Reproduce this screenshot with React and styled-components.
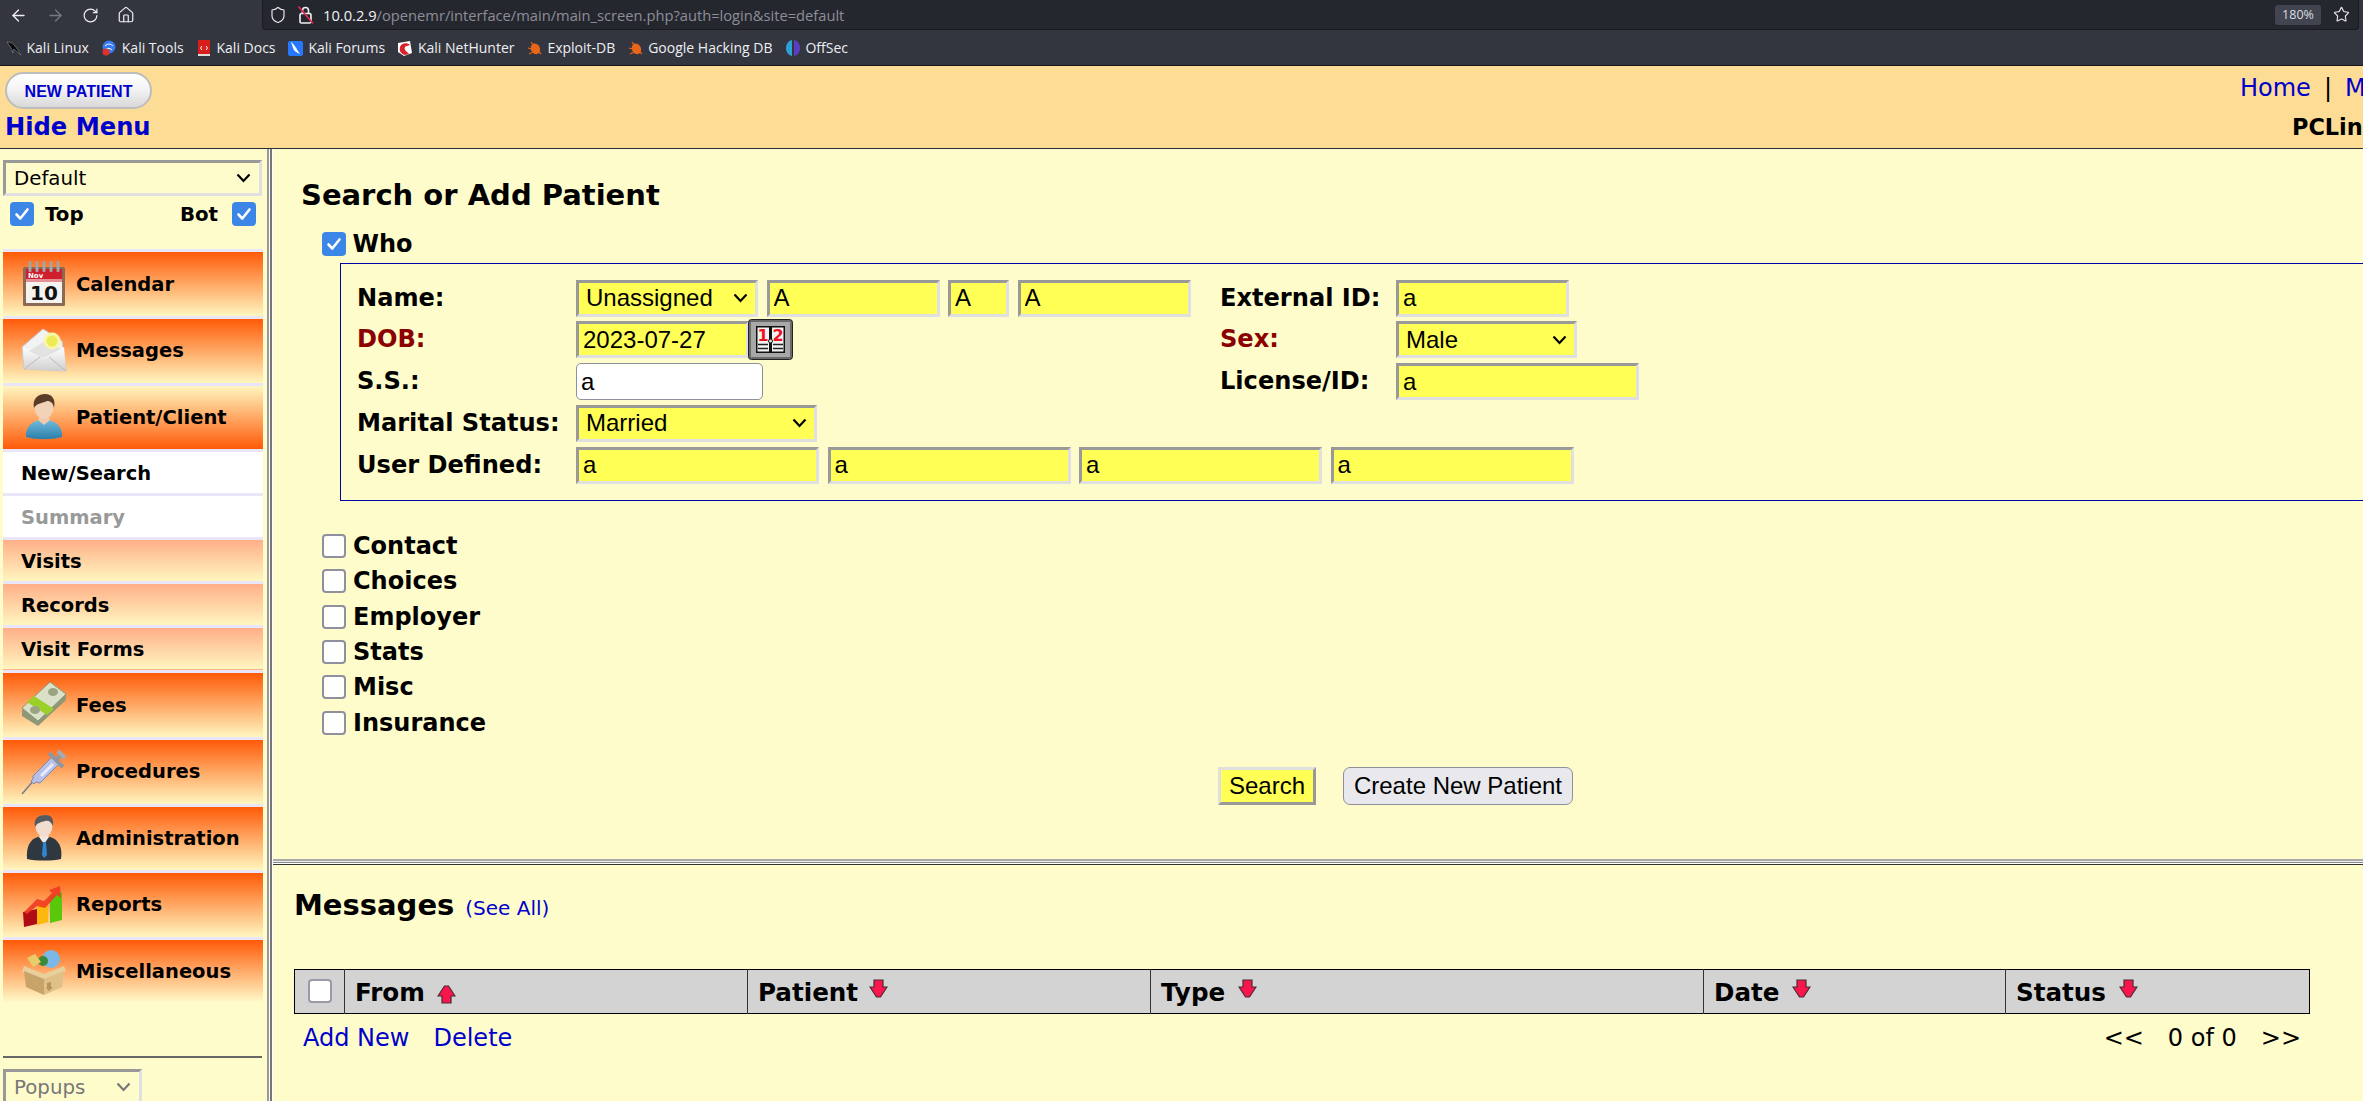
import React from "react";
import styled, { createGlobalStyle } from "styled-components";
import { ArrowLeft, ArrowRight, RotateCw, Home, Shield, Star } from "lucide-react";

const GlobalStyle = createGlobalStyle`
  html, body {
    margin: 0;
    padding: 0;
    height: 100%;
    overflow: hidden;
    background: #fffccc;
  }
  * { box-sizing: border-box; }
`;

const sans = `"DejaVu Sans", sans-serif`;
const arial = `"Liberation Sans", Arial, sans-serif`;
const ui = `"Open Sans", "Noto Sans", sans-serif`;

const Page = styled.div`
  width: 2363px;
  height: 1101px;
  overflow: hidden;
  display: flex;
  flex-direction: column;
  font-family: ${sans};
  color: #000;
  background: #fffccc;
`;

/* browser chrome */
const Chrome = styled.div`
  height: 66px;
  flex: none;
  background: #33363f;
  border-bottom: 1px solid #16171c;
`;

const NavRow = styled.div`
  height: 30px;
  display: flex;
  align-items: flex-start;
`;

const NavButtons = styled.div`
  width: 262px;
  height: 30px;
  padding-left: 9px;
  display: flex;
  align-items: center;
  gap: 17.5px;
  color: #f0f0f4;
`;

const UrlBar = styled.div`
  width: 2097px;
  height: 30px;
  background: #25272f;
  border: 1px solid #1a1b21;
  border-top: none;
  border-radius: 0 0 4px 4px;
  display: flex;
  align-items: center;
  padding-left: 6px;
  color: #e8e8ee;
`;

const UrlText = styled.span`
  font: 400 14.7px ${ui};
  margin-left: 8px;
  color: #8d8e98;
  white-space: nowrap;
  b {
    font-weight: 400;
    color: #f2f2f6;
  }
`;

const ZoomBadge = styled.span`
  margin-left: auto;
  width: 46px;
  height: 20px;
  background: #42444f;
  border-radius: 3px;
  color: #dcdde3;
  font: 400 12.5px/20px ${ui};
  text-align: center;
`;

const StarWrap = styled.span`
  margin: 0 8px 0 12px;
  display: flex;
  color: #e6e6ea;
`;

const BookmarkRow = styled.div`
  height: 35px;
  padding-left: 6px;
  display: flex;
  align-items: center;
  gap: 12.4px;
`;

const Bookmark = styled.span`
  display: flex;
  align-items: center;
  gap: 4.5px;
  font: 400 14px ${ui};
  color: #eeeef2;
  white-space: nowrap;
`;

/* orange header */
const Header = styled.header`
  height: 83px;
  flex: none;
  background: #fddc95;
  border-bottom: 1px solid #2b2f3c;
  display: flex;
  padding: 6px 0 0 5px;
`;

const HeaderLeft = styled.div`
  display: flex;
  flex-direction: column;
`;

const NewPatient = styled.button`
  width: 147px;
  height: 37px;
  border: 2px solid #bdbdbd;
  border-radius: 19px;
  background: linear-gradient(#fff 0%, #f4f4f4 45%, #d9d9d9 100%);
  color: #0000cc;
  font: 700 16px ${arial};
  padding: 2px 0 0;
`;

const HideMenu = styled.a`
  margin-top: 4px;
  color: #0000cc;
  font: 700 24.2px/28px ${sans};
`;

const HeaderRight = styled.div`
  margin-left: auto;
  width: 123px;
  white-space: nowrap;
  display: flex;
  flex-direction: column;
`;

const TopLinks = styled.div`
  font: 400 24px/32px ${sans};
  color: #0000cc;
  span {
    color: #000;
    margin: 0 13px;
  }
`;

const SiteName = styled.div`
  margin-top: 10px;
  padding-left: 52px;
  font: 700 22.4px/26px ${sans};
`;

/* body */
const Body = styled.div`
  flex: 1;
  display: flex;
  min-height: 0;
`;

const Sidebar = styled.aside`
  width: 267px;
  flex: none;
  display: flex;
  flex-direction: column;
  padding: 11px 0 0 3px;
  overflow: hidden;
`;

const SideSelect = styled.div`
  height: 36px;
  flex: none;
  border: 3px solid;
  border-color: #999 #e0e0e0 #e0e0e0 #999;
  display: flex;
  align-items: center;
  justify-content: space-between;
  padding: 0 8px 0 8px;
  font: 400 19.8px ${sans};
  color: ${(p) => (p.$muted ? "#777" : "#000")};
  width: ${(p) => p.$w || 259}px;
`;

const TopBot = styled.div`
  height: 24px;
  margin-top: 6px;
  width: 253px;
  padding-left: 7px;
  display: flex;
  align-items: center;
  font: 700 19.8px ${sans};
  flex: none;
`;

const Check = styled.span`
  width: 24px;
  height: 24px;
  flex: none;
  border-radius: 4px;
  display: flex;
  align-items: center;
  justify-content: center;
  background: ${(p) => (p.$on ? "#3b86e6" : "#fff")};
  border: ${(p) => (p.$on ? "none" : "2px solid #8f8f9d")};
`;

const TableCheck = styled(Check)`
  border: 2.5px solid #9a9aa8;
  margin-top: -3px;
`;

const TopBotLabel = styled.span`
  margin: ${(p) => (p.$right ? "0 14px 0 auto" : "0 0 0 11px")};
`;

const Menu = styled.nav`
  margin-top: 23.4px;
  width: 260px;
  flex: none;
`;

const MenuItem = styled.div`
  height: 66.6px;
  border-top: 3.6px solid #e9e6f9;
  display: flex;
  align-items: center;
  padding-left: 18px;
  font: 700 19.5px ${sans};
  background: ${(p) =>
    p.$open
      ? "linear-gradient(#fff6c0, #ff5a08)"
      : p.$last
      ? "linear-gradient(#ff5a08, #fffccc)"
      : "linear-gradient(#ff5a08, #fff6c0)"};
  background-clip: padding-box;
`;

const IconSlot = styled.span`
  width: 46px;
  height: 46px;
  margin-right: 9px;
  flex: none;
  display: flex;
`;

const SubItem = styled.div`
  height: 44px;
  border-top: 3.6px solid #e9e6f9;
  display: flex;
  align-items: center;
  padding: 2px 0 0 18px;
  font: 700 19.5px ${sans};
  color: ${(p) => (p.$muted ? "#999" : "#000")};
  background: ${(p) => (p.$plain ? "#fff" : "linear-gradient(#ffaf88, #fff6c0)")};
  background-clip: padding-box;
  ${(p) => (p.$edge ? "height: 45.2px; border-bottom: 1.2px solid #ffaf88;" : "")}
`;

const SideRule = styled.div`
  margin-top: 53px;
  width: 259px;
  height: 2px;
  flex: none;
  background: #666;
`;

const PopupWrap = styled.div`
  margin-top: 11px;
`;

const VSplit = styled.div`
  width: 6px;
  flex: none;
  background: linear-gradient(90deg, #999 0 2px, #fff 2px 3px, #777 3px 5px, #fff 5px);
`;

const HSplit = styled.div`
  height: 6px;
  flex: none;
  background: linear-gradient(#aaa 0 1.5px, #eee 1.5px 3px, #888 3px 4px, #fff 4px 5px, #333 5px);
`;

const Main = styled.main`
  flex: 1;
  min-width: 0;
  display: flex;
  flex-direction: column;
`;

const SearchPane = styled.section`
  height: 710px;
  flex: none;
  padding: 28.5px 0 0 28px;
`;

const Title = styled.h1`
  margin: 0;
  font: 700 29px/34px ${sans};
  white-space: nowrap;
`;

const GroupRow = styled.label`
  display: flex;
  align-items: center;
  gap: 7px;
  height: 35.3px;
  margin-left: 21px;
  font: 700 24px ${sans};
`;

const WhoRow = styled(GroupRow)`
  margin-top: 20px;
  height: 24px;
  gap: 6.5px;
`;

const WhoBox = styled.div`
  margin: 7px 0 0 39px;
  width: 2100px;
  height: 238px;
  border: 1px solid #0000aa;
  padding: 16px 0 0 16px;
  display: grid;
  grid-template-columns: 219px 644px 176px 1fr;
  grid-auto-rows: 41.8px;
  align-items: start;
`;

const Label = styled.div`
  font: 700 24.1px/37px ${sans};
  color: ${(p) => (p.$req ? "#8b0000" : "#000")};
  white-space: nowrap;
`;

const Fields = styled.div`
  display: flex;
  gap: 8.5px;
  align-items: flex-start;
`;

const WideFields = styled(Fields)`
  grid-column: 2 / -1;
`;

const Input = styled.input`
  width: ${(p) => p.$w}px;
  height: 37px;
  flex: none;
  padding: 0 0 0 4px;
  margin: 0;
  font: 400 24px ${arial};
  color: #000;
  outline: none;
  background: ${(p) => (p.$plain ? "#fff" : "#ffff55")};
  border: ${(p) => (p.$plain ? "1.5px solid #8f8f9d" : "3px solid")};
  border-color: ${(p) => (p.$plain ? "#8f8f9d" : "#999 #e0e0e0 #e0e0e0 #999")};
  border-radius: ${(p) => (p.$plain ? "5px" : "0")};
`;

const Select = styled.div`
  width: ${(p) => p.$w}px;
  height: 37px;
  flex: none;
  background: #ffff55;
  border: 3px solid;
  border-color: #999 #e0e0e0 #e0e0e0 #999;
  padding: 0 7px 0 7px;
  display: flex;
  align-items: center;
  justify-content: space-between;
  font: 400 24px ${arial};
`;

const DateWrap = styled.div`
  display: flex;
  align-items: flex-start;
`;

const CheckList = styled.div`
  margin-top: 28px;
`;

const Actions = styled.div`
  margin: 27px 0 0 917px;
  display: flex;
  gap: 27px;
`;

const SearchButton = styled.button`
  width: 98px;
  height: 38px;
  padding: 0;
  background: #ffff55;
  border: 3px solid;
  border-color: #e0e0e0 #999 #999 #e0e0e0;
  font: 400 24px ${arial};
`;

const CreateButton = styled.button`
  width: 230px;
  height: 38px;
  padding: 0;
  background: #e9e9ed;
  border: 1.5px solid #8f8f9d;
  border-radius: 7px;
  font: 400 24px ${arial};
`;

const MessagesPane = styled.section`
  flex: 1;
  padding: 23px 0 0 21px;
`;

const TitleRow = styled.div`
  display: flex;
  align-items: baseline;
  gap: 11px;
  white-space: nowrap;
`;

const SeeAll = styled.a`
  font: 400 20px ${sans};
  color: #0000cc;
`;

const Table = styled.table`
  margin-top: 46.5px;
  width: 2015px;
  height: 45px;
  table-layout: fixed;
  border-collapse: collapse;
  background: #d3d3d3;
  border: 1.5px solid #000;
`;

const Th = styled.th`
  width: ${(p) => p.$w}px;
  padding: 3px 0 0 10px;
  border-left: 1px solid #333;
  font: 700 24.6px ${sans};
  text-align: left;
  white-space: nowrap;
  &:first-child {
    padding-left: 13px;
    border-left: none;
  }
`;

const SortIcon = styled.svg`
  width: 19px;
  height: 19px;
  margin-left: ${(p) => p.$gap}px;
  vertical-align: ${(p) => (p.$up ? "-3px" : "3px")};
`;

const TableFooter = styled.div`
  margin-top: 9.5px;
  width: 2015px;
  display: flex;
  justify-content: space-between;
  padding: 0 8px 0 9px;
  font: 400 24px/30px ${sans};
`;

const FooterLinks = styled.div`
  display: flex;
  gap: 24px;
  color: #0000cc;
`;

const Pager = styled.div`
  display: flex;
  gap: 24px;
`;

function CheckMark() {
  return (
    <svg width="16" height="16" viewBox="0 0 16 16" fill="none">
      <path d="M2.5 8.5 6.3 12.5 13.5 3.5" stroke="#fff" strokeWidth="2.6" strokeLinecap="round" strokeLinejoin="round" />
    </svg>
  );
}

function Chevron({ color = "#000" }) {
  return (
    <svg width="15" height="10" viewBox="0 0 15 10" fill="none">
      <path d="M1.5 1.5 7.5 8 13.5 1.5" stroke={color} strokeWidth="2.2" />
    </svg>
  );
}

function LockSlash() {
  return (
    <svg width="18" height="20" viewBox="0 0 18 20" fill="none" style={{ marginLeft: 10 }}>
      <rect x="3" y="8.5" width="11" height="9.5" rx="1.5" stroke="#f0f0f4" strokeWidth="1.6" />
      <path d="M5.5 8.5V5.5a3 3 0 0 1 6 0v3" stroke="#f0f0f4" strokeWidth="1.6" />
      <path d="M1.5 1.5 16 18.5" stroke="#e22850" strokeWidth="1.7" />
    </svg>
  );
}

/* bookmark favicons */
const favicons = {
  kali: (
    <path d="M1 2c3 0 6 1 8 4 2 2 3 5 6 9-3-2-5-4-7-6-1 1-1 2-1 4-1-2-1-4-2-5-1-2-3-4-4-6z" fill="#0b0b0d" stroke="#9aa0a8" strokeWidth=".5" />
  ),
  tools: (
    <>
      <circle cx="8" cy="7" r="6.5" fill="#367bf0" />
      <path d="M4 6c3-3 6-2 8 0M5 9c2-1 4-1 6 1" stroke="#fff" fill="none" />
      <circle cx="5" cy="12" r="3.5" fill="#e0322d" />
    </>
  ),
  docs: (
    <>
      <rect x="2" y="0" width="12" height="16" fill="#d81d1d" />
      <rect x="2" y="14" width="12" height="2" fill="#ddd" />
      <path d="M6 6 4.5 8 6 10M10 6l1.5 2L10 10" stroke="#fff" fill="none" />
    </>
  ),
  forums: (
    <>
      <rect x="0" y="1" width="15" height="15" rx="2" fill="#2777ff" />
      <path d="M3 2c3 2 5 6 9 12-4-2-6-3-7-6z" fill="#fff" />
    </>
  ),
  hunter: (
    <>
      <path d="M1 3 13 1l2 12-8 3-6-4z" fill="#fff" />
      <path d="M3 7c1-4 7-5 10-2l-3 1C8 6 7 8 8 10l4 4-4 1C4 14 2 11 3 7z" fill="#d8222c" />
    </>
  ),
  bug: (
    <>
      <ellipse cx="8.5" cy="9" rx="4.5" ry="5.5" fill="#e8661a" transform="rotate(-25 8 9)" />
      <path d="M4 2l3 4M1 8l4 1M2 14l4-2M14 14l-3-3" stroke="#e8661a" strokeWidth="1.2" />
    </>
  ),
  offsec: (
    <>
      <path d="M7 0C3 1 1 4 1 8s2 7 6 8z" fill="#2f9fd8" />
      <path d="M9 0c4 1 6 4 6 8s-2 7-6 8z" fill="#5a3fc0" />
    </>
  ),
};

const bookmarks = [
  ["kali", "Kali Linux"],
  ["tools", "Kali Tools"],
  ["docs", "Kali Docs"],
  ["forums", "Kali Forums"],
  ["hunter", "Kali NetHunter"],
  ["bug", "Exploit-DB"],
  ["bug", "Google Hacking DB"],
  ["offsec", "OffSec"],
];

/* menu pictures */
function CalendarIcon() {
  return (
    <svg viewBox="0 0 46 46" width="46" height="46">
      <rect x="2" y="6" width="42" height="39" rx="1.5" fill="#8a6a52" />
      <rect x="5" y="8" width="36" height="34" fill="#f5f3f0" />
      <rect x="5" y="8" width="36" height="13" fill="#cf1f2c" />
      <rect x="5" y="18" width="36" height="3" fill="#fff" opacity=".5" />
      {[9, 16, 23, 30, 37].map((x) => (
        <rect key={x} x={x - 1.5} y="0" width="3" height="11" rx="1" fill="#a6a3a3" />
      ))}
      <text x="7" y="17" fontSize="7" fontWeight="700" fill="#fff" fontFamily={sans}>Nov</text>
      <text x="23" y="39" fontSize="20" fontWeight="700" fill="#111" textAnchor="middle" fontFamily={sans}>10</text>
    </svg>
  );
}

function MailIcon() {
  return (
    <svg viewBox="0 0 46 46" width="46" height="46">
      <defs>
        <linearGradient id="mailFace" x1="0" y1="0" x2="0" y2="1">
          <stop offset="0" stopColor="#fff" />
          <stop offset="1" stopColor="#cfcfcf" />
        </linearGradient>
      </defs>
      <path d="M1 19 22 1l19 12 4 30L3 41z" fill="#f3f3f3" stroke="#c9c9c9" />
      <path d="M3 19 23 31l20-12 2 24-42-2z" fill="url(#mailFace)" />
      <path d="M8 23 22 30 40 21 24 13z" fill="#e2e2e2" />
      <path d="M3 41 19 29M45 43 28 29" stroke="#bbb" fill="none" />
      <circle cx="31" cy="13" r="7" fill="#ecea55" stroke="#f8f6a8" strokeWidth="3" />
    </svg>
  );
}

function PatientIcon() {
  return (
    <svg viewBox="0 0 46 46" width="46" height="46">
      <defs>
        <linearGradient id="shirt" x1="0" y1="0" x2="0" y2="1">
          <stop offset="0" stopColor="#71bbe0" />
          <stop offset="1" stopColor="#2a7ea8" />
        </linearGradient>
      </defs>
      <path d="M5 43c-1-10 6-15 13-17h10c7 2 14 7 13 17-10 3-26 3-36 0z" fill="url(#shirt)" />
      <path d="M17 26l6 5 6-5-2-6h-8z" fill="#eec9aa" />
      <ellipse cx="23" cy="13" rx="9.5" ry="12" fill="#f2d3b8" />
      <path d="M13 14C11 4 18 0 24 0c7 0 11 5 9 14-1-5-3-7-7-7-4 2-10 2-13 7z" fill="#5a3c28" />
    </svg>
  );
}

function MoneyIcon() {
  return (
    <svg viewBox="0 0 46 46" width="46" height="46">
      <path d="M1 28 29 1l16 11v6L17 44 1 34z" fill="#8e9878" />
      <path d="M1 26 29 0l16 12-28 27z" fill="#dbe0c8" stroke="#8e9878" />
      <path d="M13 14 33 27 26 33 6 20z" fill="#9ad028" />
      <ellipse cx="32" cy="10" rx="5" ry="4" fill="#9aa483" />
      <ellipse cx="14" cy="28" rx="5" ry="4" fill="#9aa483" />
    </svg>
  );
}

function SyringeIcon() {
  return (
    <svg viewBox="0 0 46 46" width="46" height="46">
      <path d="M1 45 14 30" stroke="#777c8c" strokeWidth="1.5" />
      <path d="M12 27 31 8l7 7-19 19-4-1-2 2-3-3 2-2z" fill="#b8bfe8" stroke="#8088ac" />
      <path d="M20 27l12-12" stroke="#e8ebfa" strokeWidth="3" />
      <path d="M28 4l14 14M35 11l5-5" stroke="#8f969f" strokeWidth="4" />
      <path d="M37 2l7 7" stroke="#a4aab2" strokeWidth="4" />
    </svg>
  );
}

function AdminIcon() {
  return (
    <svg viewBox="0 0 46 46" width="46" height="46">
      <path d="M6 44c-1-12 3-20 11-22h12c8 2 13 10 11 22-9 2-25 2-34 0z" fill="#2f3740" />
      <path d="M18 22l5 7 5-7-3-4h-4z" fill="#f0e8e0" />
      <path d="M22 27h3l1 13-3 3-2-3z" fill="#2f86d0" />
      <ellipse cx="23" cy="11" rx="8.5" ry="11" fill="#f0ddcf" />
      <path d="M14 12C12 3 18 0 24 0c6 0 9 3 8 11-2-4-4-6-8-5-4 1-8 2-10 6z" fill="#555a60" />
    </svg>
  );
}

function ChartIcon() {
  return (
    <svg viewBox="0 0 46 46" width="46" height="46">
      <path d="M2 30l14-3v15L3 45z" fill="#b00c14" />
      <path d="M16 22l11-3v21l-11 3z" fill="#fdb80e" />
      <path d="M29 14l12-4v28l-12 3z" fill="#5ac80a" />
      <path d="M3 30 16 17l7 2 8-8-3-3 11-4 1 12-4-3-12 13-8-2-10 8z" fill="#ef3a22" opacity=".9" />
    </svg>
  );
}

function BoxIcon() {
  return (
    <svg viewBox="0 0 46 46" width="46" height="46">
      <circle cx="30" cy="10" r="9" fill="#7ab8e8" />
      <circle cx="22" cy="12" r="5" fill="#3a8a3a" />
      <path d="M6 9l8-4 6 8-8 5z" fill="#e8cc6a" />
      <path d="M3 17 23 25l20-8 2 5-22 8L1 23z" fill="#e8cf9c" />
      <path d="M3 22l20 8v16L5 38z" fill="#c9a46a" />
      <path d="M43 22 23 30v16l18-8z" fill="#dfc088" />
      <path d="M26 34l4-1v5l2 0-4 4-3-3 1 0z" fill="#b8935c" />
    </svg>
  );
}

function CalendarButton() {
  return (
    <svg width="45" height="41" viewBox="0 0 45 41" style={{ marginTop: -2, marginLeft: -1 }}>
      <rect x=".5" y=".5" width="44" height="40" rx="3" fill="#6a6a6a" stroke="#222" />
      <rect x="3" y="3" width="39" height="35" fill="#a8a8a8" />
      <rect x="8" y="7" width="29" height="27" fill="#111" />
      <rect x="9.5" y="8.5" width="11.5" height="24" fill="#f2f2f2" />
      <rect x="24" y="8.5" width="11.5" height="24" fill="#f2f2f2" />
      <text x="15" y="22" fontSize="16" fontWeight="700" fill="#f01020" textAnchor="middle" fontFamily={sans}>1</text>
      <text x="30" y="22" fontSize="16" fontWeight="700" fill="#f01020" textAnchor="middle" fontFamily={sans}>2</text>
      <path d="M10 25.5h10M10 29.5h10M25 25.5h10M25 29.5h10" stroke="#222" strokeWidth="1.5" />
      <circle cx="22.5" cy="22" r="2" fill="#ddd" stroke="#111" />
    </svg>
  );
}

function SortArrow({ up, gap = 13 }) {
  return (
    <SortIcon $up={up} $gap={gap} viewBox="0 0 19 19">
      <path
        d={up ? "M7.5 1H11.5L18 11H14V18H5V11H1Z" : "M5 1H14V8H18L11.5 18H7.5L1 8H5Z"}
        fill="#f8164c"
        stroke="#4a2a36"
        strokeWidth="1.2"
      />
    </SortIcon>
  );
}

const topMenu = [
  ["Calendar", CalendarIcon],
  ["Messages", MailIcon],
];

const lowerMenu = [
  ["Fees", MoneyIcon],
  ["Procedures", SyringeIcon],
  ["Administration", AdminIcon],
  ["Reports", ChartIcon],
  ["Miscellaneous", BoxIcon],
];

export default function App() {
  return (
    <Page>
      <GlobalStyle />
      <Chrome>
        <NavRow>
          <NavButtons>
            <ArrowLeft size={19} strokeWidth={1.6} />
            <ArrowRight size={19} strokeWidth={1.6} color="#777982" />
            <RotateCw size={17} strokeWidth={1.7} />
            <Home size={18} strokeWidth={1.6} />
          </NavButtons>
          <UrlBar>
            <Shield size={18} strokeWidth={1.6} />
            <LockSlash />
            <UrlText>
              <b>10.0.2.9</b>/openemr/interface/main/main_screen.php?auth=login&amp;site=default
            </UrlText>
            <ZoomBadge>180%</ZoomBadge>
            <StarWrap>
              <Star size={17} strokeWidth={1.6} />
            </StarWrap>
          </UrlBar>
        </NavRow>
        <BookmarkRow>
          {bookmarks.map(([icon, name]) => (
            <Bookmark key={name}>
              <svg width="16" height="16" viewBox="0 0 16 16">{favicons[icon]}</svg>
              {name}
            </Bookmark>
          ))}
        </BookmarkRow>
      </Chrome>

      <Header>
        <HeaderLeft>
          <NewPatient>NEW PATIENT</NewPatient>
          <HideMenu>Hide Menu</HideMenu>
        </HeaderLeft>
        <HeaderRight>
          <TopLinks>
            Home<span>|</span>Manual
          </TopLinks>
          <SiteName>PCLinuxOS</SiteName>
        </HeaderRight>
      </Header>

      <Body>
        <Sidebar>
          <SideSelect>
            Default
            <Chevron />
          </SideSelect>
          <TopBot>
            <Check $on>
              <CheckMark />
            </Check>
            <TopBotLabel>Top</TopBotLabel>
            <TopBotLabel $right>Bot</TopBotLabel>
            <Check $on>
              <CheckMark />
            </Check>
          </TopBot>
          <Menu>
            {topMenu.map(([name, Icon]) => (
              <MenuItem key={name}>
                <IconSlot>
                  <Icon />
                </IconSlot>
                {name}
              </MenuItem>
            ))}
            <MenuItem $open>
              <IconSlot>
                <PatientIcon />
              </IconSlot>
              Patient/Client
            </MenuItem>
            <SubItem $plain>New/Search</SubItem>
            <SubItem $plain $muted>Summary</SubItem>
            <SubItem>Visits</SubItem>
            <SubItem>Records</SubItem>
            <SubItem $edge>Visit Forms</SubItem>
            {lowerMenu.map(([name, Icon]) => (
              <MenuItem key={name} $last={name === "Miscellaneous"}>
                <IconSlot>
                  <Icon />
                </IconSlot>
                {name}
              </MenuItem>
            ))}
          </Menu>
          <SideRule />
          <PopupWrap>
            <SideSelect $muted $w={139}>
              Popups
              <Chevron color="#777" />
            </SideSelect>
          </PopupWrap>
        </Sidebar>
        <VSplit />
        <Main>
          <SearchPane>
            <Title>Search or Add Patient</Title>
            <WhoRow>
              <Check $on>
                <CheckMark />
              </Check>
              Who
            </WhoRow>
            <WhoBox>
              <Label>Name:</Label>
              <Fields>
                <Select $w={182}>
                  Unassigned
                  <Chevron />
                </Select>
                <Input $w={173} defaultValue="A" />
                <Input $w={61} defaultValue="A" />
                <Input $w={173} defaultValue="A" />
              </Fields>
              <Label>External ID:</Label>
              <Fields>
                <Input $w={173} defaultValue="a" />
              </Fields>

              <Label $req>DOB:</Label>
              <Fields>
                <DateWrap>
                  <Input $w={173} defaultValue="2023-07-27" />
                  <CalendarButton />
                </DateWrap>
              </Fields>
              <Label $req>Sex:</Label>
              <Fields>
                <Select $w={181}>
                  Male
                  <Chevron />
                </Select>
              </Fields>

              <Label>S.S.:</Label>
              <Fields>
                <Input $w={187} $plain defaultValue="a" />
              </Fields>
              <Label>License/ID:</Label>
              <Fields>
                <Input $w={243} defaultValue="a" />
              </Fields>

              <Label>Marital Status:</Label>
              <Fields>
                <Select $w={241}>
                  Married
                  <Chevron />
                </Select>
              </Fields>
              <div />
              <div />

              <Label>User Defined:</Label>
              <WideFields>
                <Input $w={243} defaultValue="a" />
                <Input $w={243} defaultValue="a" />
                <Input $w={243} defaultValue="a" />
                <Input $w={243} defaultValue="a" />
              </WideFields>
            </WhoBox>
            <CheckList>
              {["Contact", "Choices", "Employer", "Stats", "Misc", "Insurance"].map((name) => (
                <GroupRow key={name}>
                  <Check />
                  {name}
                </GroupRow>
              ))}
            </CheckList>
            <Actions>
              <SearchButton>Search</SearchButton>
              <CreateButton>Create New Patient</CreateButton>
            </Actions>
          </SearchPane>
          <HSplit />
          <MessagesPane>
            <TitleRow>
              <Title>Messages</Title>
              <SeeAll>(See All)</SeeAll>
            </TitleRow>
            <Table>
              <thead>
                <tr>
                  <Th $w={50}>
                    <TableCheck />
                  </Th>
                  <Th $w={403}>
                    From
                    <SortArrow up gap={12} />
                  </Th>
                  <Th $w={403}>
                    Patient
                    <SortArrow gap={11} />
                  </Th>
                  <Th $w={553}>
                    Type
                    <SortArrow />
                  </Th>
                  <Th $w={302}>
                    Date
                    <SortArrow />
                  </Th>
                  <Th $w={304}>
                    Status
                    <SortArrow />
                  </Th>
                </tr>
              </thead>
            </Table>
            <TableFooter>
              <FooterLinks>
                <span>Add New</span>
                <span>Delete</span>
              </FooterLinks>
              <Pager>
                <span>&lt;&lt;</span>
                <span>0 of 0</span>
                <span>&gt;&gt;</span>
              </Pager>
            </TableFooter>
          </MessagesPane>
        </Main>
      </Body>
    </Page>
  );
}
